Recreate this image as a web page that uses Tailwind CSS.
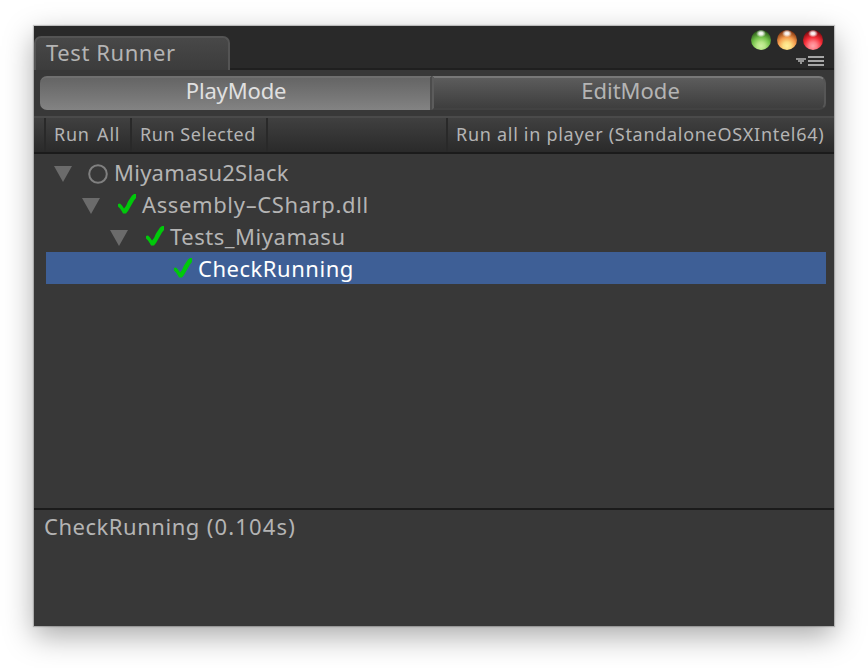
<!DOCTYPE html>
<html lang="en">
<head>
<meta charset="utf-8">
<title>Test Runner</title>
<script src="https://cdn.jsdelivr.net/npm/@tailwindcss/browser@4"></script>
</head>
<body class="w-[868px] h-[668px] overflow-hidden bg-white pl-[34px] pt-[26px] font-['Noto_Sans','Lucida_Grande',sans-serif] text-[22px] text-[#b4b4b4]">
<svg class="hidden">
  <defs>
    <symbol id="check" viewBox="0 0 18 20"><path d="M0 10L2 9.6L4 11.5L6 14.5L8 12L10 7.5L12 4.5L14 1.5L16 0H18V4L16 6.5L14 10L12 13.5L10 17L8 19.5H5L4 17.5L2 14.5L0 12.5Z" fill="#00c90a"/></symbol>
    <symbol id="fold" viewBox="0 0 18 16"><path d="M0 0H18L9 16Z" fill="#6b6b6b"/></symbol>
  </defs>
</svg>
<main class="w-[800px] h-[600px] flex flex-col bg-[#383838] shadow-[0_0_1px_1px_rgba(0,0,0,0.2),0_10px_28px_rgba(0,0,0,0.34)]">
  <header class="h-[44px] shrink-0 flex items-end justify-between bg-[#292929] border-b-2 border-[#1f1f1f]">
    <div class="w-[196px] h-[34px] -mb-[2px] relative rounded-t-[7px] border-2 border-b-0 border-[#545454] bg-linear-to-b from-[#484848] to-[#3c3c3c] pl-[10px] leading-[28px] tracking-[0.58px] whitespace-nowrap">Test Runner</div>
    <div class="h-full flex flex-col items-end pr-[10px] pt-[3px]">
      <svg class="w-[74px] h-[22px]" viewBox="0 0 74 22">
        <defs>
          <radialGradient id="g" cx=".5" cy=".8" r=".8"><stop offset="0" stop-color="#cdf0a0"/><stop offset=".25" stop-color="#b4e584"/><stop offset=".55" stop-color="#74c24a"/><stop offset="1" stop-color="#1f4a10"/></radialGradient>
          <radialGradient id="o" cx=".5" cy=".8" r=".8"><stop offset="0" stop-color="#fff09a"/><stop offset=".25" stop-color="#fddc80"/><stop offset=".55" stop-color="#f39a4c"/><stop offset="1" stop-color="#702404"/></radialGradient>
          <radialGradient id="r" cx=".5" cy=".8" r=".8"><stop offset="0" stop-color="#ffa4aa"/><stop offset=".25" stop-color="#ff7d86"/><stop offset=".55" stop-color="#f42c36"/><stop offset="1" stop-color="#680206"/></radialGradient>
          <radialGradient id="w"><stop offset="0" stop-color="#fff"/><stop offset=".4" stop-color="#fff" stop-opacity=".85"/><stop offset="1" stop-color="#fff" stop-opacity="0"/></radialGradient>
        </defs>
        <circle cx="11" cy="11" r="10" fill="url(#g)"/><circle cx="37" cy="11" r="10" fill="url(#o)"/><circle cx="63" cy="11" r="10" fill="url(#r)"/>
        <g fill="url(#w)"><ellipse cx="11" cy="4.5" rx="5" ry="3.8"/><ellipse cx="37" cy="4.5" rx="5" ry="3.8"/><ellipse cx="63" cy="4.5" rx="5" ry="3.8"/></g>
      </svg>
      <svg class="w-[28px] h-[10px] mt-[5px]" viewBox="0 0 28 10" fill="#a6a6a6"><path d="M0 2H10V4H8V6H6V8H4V6H2V4H0Z" fill-opacity=".85"/><path d="M12 0h16v2H12zM12 4h16v2H12zM12 8h16v2H12z"/></svg>
    </div>
  </header>
  <nav class="h-[46px] shrink-0 pt-[6px] pl-[6px] pr-[8px] flex text-center">
    <button class="w-[392px] h-[34px] rounded-l-[7px] border-t-2 border-r-2 border-t-[#6f6f6f] border-r-[#4c4c4c] bg-linear-to-b from-[#656565] to-[#838383] text-[#e0e0e0] leading-[24px] pb-[8px] pl-[2px] tracking-[-0.15px]">PlayMode</button>
    <button class="w-[394px] h-[34px] rounded-r-[7px] border-2 border-t-[#787878] border-l-[#5c5c5c] border-r-[#565656] border-b-[#424242] bg-linear-to-b from-[#5c5c5c] to-[#3e3e3e] leading-[24px] pb-[6px] pl-[3px]">EditMode</button>
  </nav>
  <div class="h-[38px] shrink-0 flex border-t-2 border-t-[#4a4a4a] border-b-2 border-b-[#1b1b1b] bg-linear-to-b from-[#404040] to-[#2a2a2a] text-[18px] leading-[31px] whitespace-nowrap">
    <div class="w-[12px] border-r-2 border-[#292929]"></div>
    <button class="w-[86px] h-[34px] pb-[1px] pl-[8px] text-left border-r-2 border-[#292929] tracking-[0.75px] [word-spacing:2px]">Run All</button>
    <button class="w-[136px] h-[34px] pb-[1px] pl-[8px] text-left border-r-2 border-[#292929] tracking-[0.55px]">Run Selected</button>
    <div class="w-[180px] border-r-2 border-[#292929]"></div>
    <button class="h-[34px] pb-[1px] pl-[8px] text-left tracking-[0.71px]">Run all in player (StandaloneOSXIntel64)</button>
  </div>
  <section class="h-[356px] shrink-0 pt-[2px] pl-[12px] pr-[8px] border-b-2 border-[#1b1b1b] leading-[32px] whitespace-nowrap">
    <div class="h-[32px] flex items-center pl-[8px]"><svg class="w-[18px] h-[16px] mt-[3px]"><use href="#fold"/></svg><svg class="w-[20px] h-[20px] ml-[16px] mr-[6px] mt-[3px]" viewBox="0 0 20 20"><circle cx="10" cy="10" r="8.8" fill="none" stroke="#808080" stroke-width="2"/></svg><span class="tracking-[0.25px]">Miyamasu2Slack</span></div>
    <div class="h-[32px] flex items-center pl-[36px]"><svg class="w-[18px] h-[16px] mt-[3px]"><use href="#fold"/></svg><svg class="w-[18px] h-[20px] ml-[18px] mr-[6px]"><use href="#check"/></svg><span class="tracking-[0.62px]">Assembly<span class="inline-block scale-x-170 mx-[2px]">-</span>CSharp.dll</span></div>
    <div class="h-[32px] flex items-center pl-[64px]"><svg class="w-[18px] h-[16px] mt-[3px]"><use href="#fold"/></svg><svg class="w-[18px] h-[20px] ml-[18px] mr-[6px]"><use href="#check"/></svg><span class="tracking-[0.53px]">Tests_Miyamasu</span></div>
    <div class="h-[32px] flex items-center pl-[128px] bg-[#3e5f96] text-white"><svg class="w-[18px] h-[20px] mr-[6px]"><use href="#check"/></svg><span class="tracking-[0.53px]">CheckRunning</span></div>
  </section>
  <footer class="pl-[10px] leading-[32px] tracking-[0.53px]">CheckRunning<span class="tracking-[1.15px]"> (0.104s)</span></footer>
</main>
</body>
</html>
